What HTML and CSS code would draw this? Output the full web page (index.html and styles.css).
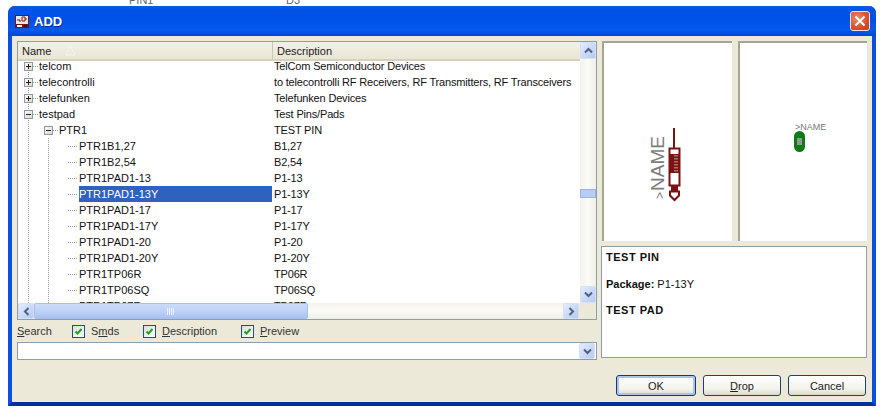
FILE: index.html
```html
<!DOCTYPE html>
<html lang="en">
<head>
<meta charset="utf-8">
<title>ADD</title>
<link rel="stylesheet" href="styles.css">
</head>
<body>
<span class="behind behind-a">PIN1</span>
<span class="behind behind-b">D3</span>
<div class="window">
  <div class="titlebar">
    <svg class="app-icon" width="14" height="13" viewBox="0 0 14 13">
      <rect width="14" height="13" fill="#7a1010"/>
      <rect x="1" y="1" width="12" height="8" fill="#e8e8e8"/>
      <path d="M2 5h3v2M7 2h3v4H7zM10 4h2" fill="none" stroke="#8a1515" stroke-width="1"/>
      <rect x="2" y="10" width="5" height="2" fill="#fff"/>
      <rect x="9" y="10" width="3" height="2" fill="#222"/>
    </svg>
    <span class="title">ADD</span>
    <span class="close">
      <svg width="12" height="12" viewBox="0 0 12 12"><path d="M1.5 1.5l9 9M10.5 1.5l-9 9" stroke="#fff" stroke-width="2"/></svg>
    </span>
  </div>
  <div class="client">
    <div class="main">
      <div class="left">
        <div class="listview">
          <div class="list-top">
            <div class="list-col">
              <div class="header">
                <div class="hcell hname">Name <svg class="sort" width="11" height="11" viewBox="0 0 11 11"><path d="M5.500 1L1 10h9z" fill="none" stroke="#f6f5ee"/></svg></div>
                <div class="hcell hdesc">Description</div>
              </div>
              <div class="rows">
                <div class="row l0 clipped"><div class="name"><span class="box"><svg width="9" height="9" viewBox="0 0 9 9"><path d="M2 4.500h5M4.500 2v5" stroke="#222"/></svg></span><i class="dash"></i><span>telcom</span></div><div class="desc">TelCom Semiconductor Devices</div></div>
                <div class="row l0"><div class="name"><span class="box"><svg width="9" height="9" viewBox="0 0 9 9"><path d="M2 4.500h5M4.500 2v5" stroke="#222"/></svg></span><i class="dash"></i><span>telecontrolli</span></div><div class="desc">to telecontrolli RF Receivers, RF Transmitters, RF Transceivers</div></div>
                <div class="row l0"><div class="name"><span class="box"><svg width="9" height="9" viewBox="0 0 9 9"><path d="M2 4.500h5M4.500 2v5" stroke="#222"/></svg></span><i class="dash"></i><span>telefunken</span></div><div class="desc">Telefunken Devices</div></div>
                <div class="row l0"><div class="name"><span class="box"><svg width="9" height="9" viewBox="0 0 9 9"><path d="M2 4.500h5" stroke="#222"/></svg></span><i class="dash"></i><span>testpad</span></div><div class="desc">Test Pins/Pads</div></div>
                <div class="row l1"><div class="name"><span class="box"><svg width="9" height="9" viewBox="0 0 9 9"><path d="M2 4.500h5" stroke="#222"/></svg></span><i class="dash"></i><span>PTR1</span></div><div class="desc">TEST PIN</div></div>
                <div class="row l2"><div class="name"><i class="dash long"></i><span class="label">PTR1B1,27</span></div><div class="desc">B1,27</div></div>
                <div class="row l2"><div class="name"><i class="dash long"></i><span class="label">PTR1B2,54</span></div><div class="desc">B2,54</div></div>
                <div class="row l2"><div class="name"><i class="dash long"></i><span class="label">PTR1PAD1-13</span></div><div class="desc">P1-13</div></div>
                <div class="row l2 selected"><div class="name"><i class="dash long"></i><span class="label">PTR1PAD1-13Y</span></div><div class="desc">P1-13Y</div></div>
                <div class="row l2"><div class="name"><i class="dash long"></i><span class="label">PTR1PAD1-17</span></div><div class="desc">P1-17</div></div>
                <div class="row l2"><div class="name"><i class="dash long"></i><span class="label">PTR1PAD1-17Y</span></div><div class="desc">P1-17Y</div></div>
                <div class="row l2"><div class="name"><i class="dash long"></i><span class="label">PTR1PAD1-20</span></div><div class="desc">P1-20</div></div>
                <div class="row l2"><div class="name"><i class="dash long"></i><span class="label">PTR1PAD1-20Y</span></div><div class="desc">P1-20Y</div></div>
                <div class="row l2"><div class="name"><i class="dash long"></i><span class="label">PTR1TP06R</span></div><div class="desc">TP06R</div></div>
                <div class="row l2"><div class="name"><i class="dash long"></i><span class="label">PTR1TP06SQ</span></div><div class="desc">TP06SQ</div></div>
                <div class="row l2"><div class="name"><i class="dash long"></i><span class="label">PTR1TP07R</span></div><div class="desc">TP07R</div></div>
              </div>
            </div>
            <div class="vscroll">
              <span class="sbtn"><svg width="9" height="7" viewBox="0 0 9 7"><path d="M1 5.500l3.500-3.500 3.500 3.500" fill="none" stroke="#4d6185" stroke-width="2"/></svg></span>
              <div class="vtrack"><span class="vthumb"></span></div>
              <span class="sbtn"><svg width="9" height="7" viewBox="0 0 9 7"><path d="M1 1.500l3.500 3.500 3.500-3.500" fill="none" stroke="#4d6185" stroke-width="2"/></svg></span>
            </div>
          </div>
          <div class="hscroll">
            <span class="sbtn"><svg width="7" height="9" viewBox="0 0 7 9"><path d="M5.500 1L2 4.500 5.500 8" fill="none" stroke="#4d6185" stroke-width="2"/></svg></span>
            <div class="hthumb"><svg width="8" height="7" viewBox="0 0 8 7"><path d="M.5 0v7M2.500 0v7M4.500 0v7M6.500 0v7" stroke="#eef3fd"/></svg></div>
            <div class="htrack"></div>
            <span class="sbtn"><svg width="7" height="9" viewBox="0 0 7 9"><path d="M1.500 1L5 4.500 1.500 8" fill="none" stroke="#4d6185" stroke-width="2"/></svg></span>
            <span class="corner"></span>
          </div>
        </div>
        <div class="search-row">
          <span class="search-label"><u>S</u>earch</span>
          <label class="check c1"><span class="cb"><svg width="9" height="9" viewBox="0 0 9 9"><path d="M1.500 4.500l2 2 4-4.500" fill="none" stroke="#21a121" stroke-width="2"/></svg></span><span>S<u>m</u>ds</span></label>
          <label class="check c2"><span class="cb"><svg width="9" height="9" viewBox="0 0 9 9"><path d="M1.500 4.500l2 2 4-4.500" fill="none" stroke="#21a121" stroke-width="2"/></svg></span><span><u>D</u>escription</span></label>
          <label class="check"><span class="cb"><svg width="9" height="9" viewBox="0 0 9 9"><path d="M1.500 4.500l2 2 4-4.500" fill="none" stroke="#21a121" stroke-width="2"/></svg></span><span><u>P</u>review</span></label>
        </div>
        <div class="combo">
          <span class="sbtn"><svg width="9" height="7" viewBox="0 0 9 7"><path d="M1 1.500l3.500 3.500 3.500-3.500" fill="none" stroke="#4d6185" stroke-width="2"/></svg></span>
        </div>
      </div>
      <div class="right">
        <div class="previews">
          <div class="preview wide">
            <svg width="128" height="198" viewBox="0 0 128 198">
              <text class="sym-name" transform="translate(60 156) rotate(-90)"><tspan class="sym-gt">&gt;</tspan><tspan dx="1">NAME</tspan></text>
              <path d="M70 85v20" stroke="#7a1212" stroke-width="2"/>
              <rect x="65.500" y="105.500" width="10" height="37" fill="#fff" stroke="#7a1212" stroke-width="2"/>
              <rect x="66" y="111" width="9" height="19" fill="#7a1212"/>
              <path d="M71 112v17M73 112v17" stroke="#e8c8c8" stroke-dasharray="1.500 1.500"/>
              <rect x="67" y="143" width="7" height="5" fill="#7a1212"/>
              <path d="M66 148.500h9v4l-4.500 4.500-4.500-4.500z" fill="#fff" stroke="#7a1212" stroke-width="2"/>
            </svg>
          </div>
          <div class="preview">
            <svg width="127" height="198" viewBox="0 0 127 198">
              <text class="pad-name" x="55" y="87">&gt;NAME</text>
              <rect x="54" y="88" width="11" height="21" rx="5.500" fill="#0f7a18"/>
              <rect x="57" y="95" width="5" height="7" fill="#8f9a8f"/>
            </svg>
          </div>
        </div>
        <div class="info">
          <p class="b">TEST PIN</p>
          <p><b>Package:</b> P1-13Y</p>
          <p class="b">TEST PAD</p>
        </div>
      </div>
    </div>
    <div class="buttons">
      <button class="btn default">OK</button>
      <button class="btn"><u>D</u>rop</button>
      <button class="btn">Cancel</button>
    </div>
  </div>
</div>
</body>
</html>
```
FILE: styles.css
```css
html, body { margin: 0; padding: 0; background: #fff; }
body {
  width: 886px;
  height: 415px;
  overflow: hidden;
  position: relative;
  font-family: "Liberation Sans", Arial, sans-serif;
  font-size: 11px;
  color: #111;
}
.behind { position: absolute; top: -6px; font-size: 11px; color: #666; }
.behind-a { left: 129px; }
.behind-b { left: 286px; }

.window {
  position: absolute;
  left: 8px;
  top: 6px;
  width: 868px;
  height: 400px;
  box-sizing: border-box;
  display: flex;
  flex-direction: column;
  background: #0a4fd8;
  border-radius: 7px 7px 0 0;
  border-left: 4px solid #0a50dc;
  border-right: 4px solid #0a50dc;
  border-bottom: 4px solid #03309c;
}
.titlebar {
  height: 30px;
  flex: none;
  display: flex;
  align-items: center;
  margin: 0 -4px;
  padding: 0 6px 0 7px;
  border-radius: 7px 7px 0 0;
  background: linear-gradient(#0a5be0 0, #0453e6 10%, #0050e8 45%, #0459ee 80%, #0247cf 100%);
}
.app-icon { flex: none; }
.title {
  margin-left: 5px;
  flex: 1;
  color: #fff;
  font-weight: bold;
  font-size: 13px;
  text-shadow: 1px 1px 0 #0a2f90;
}
.close {
  width: 20px;
  height: 20px;
  box-sizing: border-box;
  display: flex;
  align-items: center;
  justify-content: center;
  border: 1px solid #f2e4dc;
  border-radius: 3px;
  background: radial-gradient(circle at 35% 35%, #ee8a6a, #d8502c 60%, #c23c1c);
}
.client {
  flex: 1;
  min-height: 0;
  display: flex;
  flex-direction: column;
  background: #ece9d8;
  padding: 5px 5px 6px;
}
.main { display: flex; gap: 4px; height: 317px; }
.left { width: 580px; display: flex; flex-direction: column; flex: none; }
.right { width: 266px; display: flex; flex-direction: column; gap: 5px; flex: none; }

.listview {
  height: 279px;
  box-sizing: border-box;
  border: 1px solid #8e9ea8;
  display: flex;
  flex-direction: column;
  background: #fff;
}
.list-top { flex: 1; min-height: 0; display: flex; }
.list-col { flex: 1; min-width: 0; display: flex; flex-direction: column; }
.header {
  height: 19px;
  flex: none;
  display: flex;
  background: linear-gradient(#f3f1e6, #e9e6d6);
  border-bottom: 2px solid #d6d2bd;
  box-sizing: border-box;
  padding-left: 1px;
}
.hcell { flex: 1; padding-left: 3px; line-height: 18px; color: #222; }
.hdesc { padding-left: 4px; }
.hname {
  flex: none;
  width: 250px;
  border-right: 1px solid #c9c6b2;
  display: flex;
  align-items: center;
  gap: 14px;
}
.sort { flex: none; }
.rows { flex: 1; min-height: 0; overflow: hidden; }
.row { height: 16px; display: flex; line-height: 16px; }
.row.clipped { margin-top: -3px; }
.name {
  width: 254px;
  flex: none;
  display: flex;
  align-items: center;
  box-sizing: border-box;
  background-repeat: repeat-y;
  background-size: 1px 2px;
}
.desc { padding-left: 1px; white-space: nowrap; margin-left: 1px; letter-spacing: -.17px; }
.l0 .name {
  padding-left: 6px;
  background-image: linear-gradient(#9a9a9a 50%, transparent 50%);
  background-position: 10px 0;
}
.l1 .name {
  padding-left: 26px;
  background-image: linear-gradient(#9a9a9a 50%, transparent 50%);
  background-position: 10px 0;
}
.l2 .name {
  padding-left: 50px;
  background-image:
    linear-gradient(#9a9a9a 50%, transparent 50%),
    linear-gradient(#9a9a9a 50%, transparent 50%);
  background-position: 10px 0, 30px 0;
}
.box {
  width: 9px;
  height: 9px;
  flex: none;
  box-sizing: content-box;
  outline: 1px solid #8c9aa5;
  outline-offset: -1px;
  background: linear-gradient(135deg, #fff, #d8d4c4);
  display: block;
}
.box svg { display: block; }
.dash {
  width: 5px;
  height: 1px;
  flex: none;
  margin: 0 1px 0 0;
  background-image: linear-gradient(90deg, #9a9a9a 50%, transparent 50%);
  background-size: 2px 1px;
}
.dash.long { width: 10px; margin-right: 1px; }
.label { flex: 1; align-self: stretch; }
.selected .label { background: #2f62bf; color: #fff; }

.vscroll {
  width: 16px;
  flex: none;
  display: flex;
  flex-direction: column;
  background: linear-gradient(90deg, #f3f2ec, #fbfbf8 50%, #efeee6);
}
.vtrack { flex: 1; min-height: 0; display: flex; flex-direction: column; padding-top: 130px; box-sizing: border-box; }
.vthumb { height: 9px; background: #b8ccf4; border: 1px solid #9db5e6; box-sizing: border-box; display: block; }
.sbtn {
  width: 16px;
  height: 17px;
  flex: none;
  box-sizing: border-box;
  display: flex;
  align-items: center;
  justify-content: center;
  background: linear-gradient(135deg, #e4ecfc, #b6c9f2);
  border: 1px solid #d4dff8;
  border-radius: 2px;
}
.hscroll {
  height: 16px;
  flex: none;
  display: flex;
  background: linear-gradient(#f3f2ec, #fbfbf8 50%, #efeee6);
}
.hscroll .sbtn { height: 16px; }
.hthumb {
  width: 274px;
  flex: none;
  box-sizing: border-box;
  display: flex;
  align-items: center;
  justify-content: center;
  background: linear-gradient(#cbdcf9, #bcd0f6 60%, #a9c2f0);
  border: 1px solid #a8bfee;
  border-radius: 2px;
}
.htrack { flex: 1; }
.corner { width: 17px; flex: none; background: #ece9d8; }

.search-row {
  height: 22px;
  flex: none;
  display: flex;
  align-items: center;
  color: #333;
}
.search-label { width: 55px; flex: none; }
.check { display: flex; align-items: center; gap: 6px; }
.c1 { width: 71px; flex: none; }
.c2 { width: 98px; flex: none; }
.cb {
  width: 13px;
  height: 13px;
  flex: none;
  box-sizing: border-box;
  border: 1px solid #1c5180;
  background: linear-gradient(135deg, #dcdcd7, #fff);
  display: flex;
  align-items: center;
  justify-content: center;
}
.combo {
  height: 18px;
  box-sizing: border-box;
  border: 1px solid #8e9ea8;
  background: #fff;
  display: flex;
  justify-content: flex-end;
  align-items: center;
  padding-right: 1px;
}
.combo .sbtn { height: 16px; }

.previews { display: flex; gap: 6px; height: 200px; flex: none; margin-left: 1px; }
.preview {
  width: 129px;
  flex: none;
  background: #fff;
  border-top: 2px solid #a8a493;
  border-left: 2px solid #a8a493;
  box-sizing: border-box;
}
.preview.wide { width: 130px; }
.preview svg { display: block; }
.sym-name { font-size: 19px; fill: #7d7d7d; font-family: "Liberation Sans", Arial, sans-serif; }
.sym-gt { font-size: 12px; }
.pad-name { font-size: 9px; fill: #777; font-family: "Liberation Sans", Arial, sans-serif; }
.info {
  height: 113px;
  box-sizing: border-box;
  border: 1px solid #8e9ea8;
  background: #fff;
  padding: 3px 4px;
  line-height: 14px;
}
.info p { margin: 0 0 12px; }
.info p:nth-child(2) { margin-top: 13px; }
.info .b { font-weight: bold; letter-spacing: .5px; }

.buttons {
  flex: 1;
  display: flex;
  justify-content: flex-end;
  align-items: flex-end;
  gap: 7px;
  padding-right: 1px;
}
.btn {
  width: 78px;
  height: 21px;
  padding: 0;
  font: inherit;
  color: #222;
  border: 1px solid #1f3f6e;
  border-radius: 3px;
  background: linear-gradient(#fff, #f3f2ea 70%, #dcd8ca);
}
.btn.default { width: 80px; box-shadow: inset 0 0 0 2px #a8c4ec; border-color: #123a72; }
```
